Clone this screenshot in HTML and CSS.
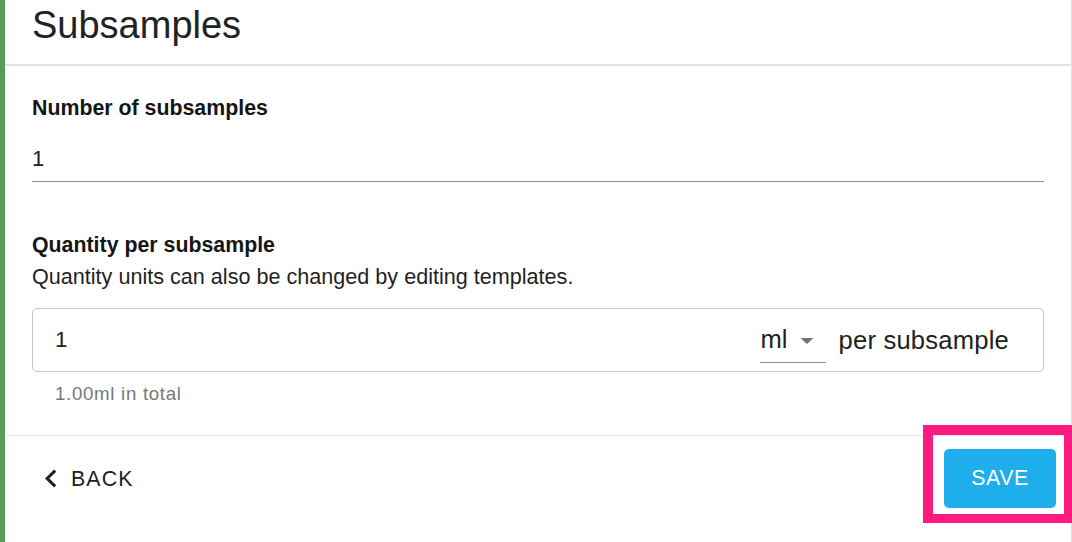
FILE: index.html
```html
<!DOCTYPE html>
<html lang="en">
<head>
<meta charset="utf-8">
<title>Subsamples</title>
<link rel="stylesheet" href="styles.css">
</head>
<body>
<div class="card">
  <header class="card-head">
    <h1 class="title">Subsamples</h1>
  </header>
  <section class="card-body">
    <div class="field">
      <div class="label">Number of subsamples</div>
      <div class="underline-input">1</div>
    </div>
    <div class="field field-qty">
      <div class="label">Quantity per subsample</div>
      <p class="help">Quantity units can also be changed by editing templates.</p>
      <div class="outlined">
        <span class="value">1</span>
        <span class="select">
          <span class="select-text">ml</span>
          <svg class="select-arrow" width="14" height="6" viewBox="0 0 14 6"><path d="M0.5 0 L13.5 0 L7 6 Z" fill="#757575"/></svg>
        </span>
        <span class="adorn">per subsample</span>
      </div>
      <p class="caption">1.00ml in total</p>
    </div>
  </section>
  <footer class="card-actions">
    <button class="back" type="button">
      <svg class="chevron" width="13" height="19" viewBox="0 0 13 19"><polyline points="11.2,1.6 3.2,9.5 11.2,17.4" fill="none" stroke="#212121" stroke-width="3.1"/></svg>
      <span>BACK</span>
    </button>
    <div class="highlight">
      <button class="save" type="button">SAVE</button>
    </div>
  </footer>
</div>
</body>
</html>
```

FILE: styles.css
```css
html, body {
  margin: 0;
  padding: 0;
  background: #ffffff;
  overflow: hidden;
}

body {
  font-family: "Liberation Sans", Arial, Helvetica, sans-serif;
  color: #212121;
}

.card {
  box-sizing: border-box;
  width: 1072px;
  height: 542px;
  border-left: 5px solid #579e5c;
  border-right: 1px solid #e2e2e2;
  background: #ffffff;
}

.card-head {
  padding: 2px 27px 16px;
  border-bottom: 2px solid #e2e2e2;
}

.title {
  margin: 0;
  font-size: 38px;
  line-height: 46px;
  font-weight: 400;
  color: #222222;
}

.card-body {
  padding: 30px 27px 30px;
  border-bottom: 1px solid #e8e8e8;
}

.label {
  font-size: 21.33px;
  line-height: 24px;
  font-weight: 700;
  color: #151515;
}

.underline-input {
  margin-top: 23px;
  padding: 4px 0 10px;
  font-size: 22px;
  line-height: 24px;
  border-bottom: 1px solid #8f8f8f;
}

.field-qty {
  margin-top: 51px;
}

.help {
  margin: 8px 0 0;
  font-size: 21.6px;
  line-height: 24px;
  color: #1f1f1f;
}

.outlined {
  box-sizing: border-box;
  margin-top: 18.5px;
  height: 64px;
  width: 1012px;
  border: 1px solid #c4c4c4;
  border-radius: 5px;
  display: flex;
  align-items: center;
  padding: 0 34px 0 22px;
  line-height: 24px;
}

.value {
  flex: 1;
  font-size: 22.3px;
}

.select {
  box-sizing: border-box;
  display: flex;
  align-items: flex-start;
  width: 66px;
  height: 40px;
  margin-top: 6px;
  padding-top: 4px;
  border-bottom: 1px solid #8f8f8f;
  font-size: 25.6px;
}

.select-text {
  flex: 1;
  padding-left: 1px;
}

.select-arrow {
  margin-right: 12px;
  margin-top: 11px;
}

.adorn {
  margin-left: 13px;
  font-size: 25.6px;
  letter-spacing: 0.2px;
}

.caption {
  margin: 11px 0 0 23px;
  font-size: 18.67px;
  line-height: 22px;
  letter-spacing: 0.7px;
  color: #777777;
}

.card-actions {
  display: flex;
  justify-content: space-between;
  align-items: flex-start;
  padding: 13px 15px 0 0;
}

.back {
  display: flex;
  align-items: center;
  gap: 14px;
  margin-top: 18px;
  padding: 0 0 0 39px;
  border: none;
  background: transparent;
  font-family: "Liberation Sans", Arial, Helvetica, sans-serif;
  font-size: 21.33px;
  line-height: 24px;
  letter-spacing: 1.1px;
  color: #212121;
  cursor: pointer;
}

.highlight {
  position: relative;
}

.highlight::before {
  content: "";
  position: absolute;
  left: -21px;
  top: -24px;
  width: 150px;
  height: 98px;
  box-sizing: border-box;
  border: 10px solid #fc1a80;
  border-right-width: 9px;
  border-bottom-width: 9px;
}

.save {
  position: relative;
  width: 112px;
  height: 59px;
  border: none;
  border-radius: 5px;
  background: #1eaeeb;
  color: #ffffff;
  font-family: "Liberation Sans", Arial, Helvetica, sans-serif;
  font-size: 21.33px;
  letter-spacing: 0.6px;
  cursor: pointer;
}
```
